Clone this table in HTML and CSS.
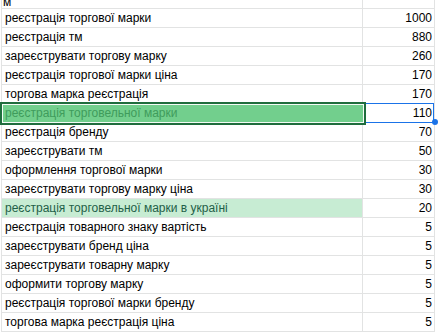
FILE: index.html
```html
<!DOCTYPE html>
<html lang="uk">
<head>
<meta charset="utf-8">
<title>Sheet</title>
<link rel="stylesheet" href="styles.css">
</head>
<body>
<div class="sheet">
  <div class="row head"><div class="cell a"><span class="cut">м</span></div><div class="cell b"></div></div>
  <div class="row"><div class="cell a">реєстрація торгової марки</div><div class="cell b">1000</div></div>
  <div class="row"><div class="cell a">реєстрація тм</div><div class="cell b">880</div></div>
  <div class="row"><div class="cell a">зареєструвати торгову марку</div><div class="cell b">260</div></div>
  <div class="row"><div class="cell a">реєстрація торгової марки ціна</div><div class="cell b">170</div></div>
  <div class="row"><div class="cell a">торгова марка реєстрація</div><div class="cell b">170</div></div>
  <div class="row sel"><div class="cell a"><span class="hl"></span><span class="txt">реєстрація торговельної марки</span></div><div class="cell b"><span class="focus"></span><span class="txt">110</span><span class="handle"></span></div></div>
  <div class="row"><div class="cell a">реєстрація бренду</div><div class="cell b">70</div></div>
  <div class="row"><div class="cell a">зареєструвати тм</div><div class="cell b">50</div></div>
  <div class="row"><div class="cell a">оформлення торгової марки</div><div class="cell b">30</div></div>
  <div class="row"><div class="cell a">зареєструвати торгову марку ціна</div><div class="cell b">30</div></div>
  <div class="row light"><div class="cell a">реєстрація торговельної марки в україні</div><div class="cell b">20</div></div>
  <div class="row"><div class="cell a">реєстрація товарного знаку вартість</div><div class="cell b">5</div></div>
  <div class="row"><div class="cell a">зареєструвати бренд ціна</div><div class="cell b">5</div></div>
  <div class="row"><div class="cell a">зареєструвати товарну марку</div><div class="cell b">5</div></div>
  <div class="row"><div class="cell a">оформити торгову марку</div><div class="cell b">5</div></div>
  <div class="row"><div class="cell a">реєстрація торгової марки бренду</div><div class="cell b">5</div></div>
  <div class="row"><div class="cell a">торгова марка реєстрація ціна</div><div class="cell b">5</div></div>
</div>
</body>
</html>
```
FILE: styles.css
```css
html, body {
  margin: 0;
  padding: 0;
  background: #fff;
  height: 333px;
  overflow: hidden;
}
body {
  font-family: "Liberation Sans", Arial, sans-serif;
  font-size: 12px;
  color: #000;
}
.sheet {
  margin-left: 1px;
  border-left: 1px solid #e2e3e3;
  width: 433px;
}
.row {
  display: flex;
  height: 19px;
}
.cell {
  box-sizing: border-box;
  height: 19px;
  line-height: 18px;
  border-right: 1px solid #e2e3e3;
  border-bottom: 1px solid #e2e3e3;
  white-space: nowrap;
  overflow: hidden;
}
.a {
  width: 361px;
  padding-left: 3px;
}
.b {
  width: 72px;
  padding-right: 2px;
  text-align: right;
}
.head, .head .cell {
  height: 9px;
}
.cut {
  display: block;
  margin-top: -7px;
  margin-left: -2px;
}
.sel .cell {
  position: relative;
  overflow: visible;
}
.sel .txt {
  position: relative;
  z-index: 3;
}
.sel .a .txt {
  color: #3f9c5c;
}
.hl {
  position: absolute;
  left: -2px;
  top: -2px;
  width: 366px;
  height: 23px;
  box-sizing: border-box;
  border: 2px solid #1f6d3d;
  background: #72cf8d;
  box-shadow: inset 0 0 0 1px #f4fbf6;
  z-index: 2;
}
.focus {
  position: absolute;
  left: -1px;
  top: -1px;
  width: 72px;
  height: 20px;
  box-sizing: border-box;
  border: 1px solid #1a73e8;
  z-index: 1;
}
.handle {
  position: absolute;
  left: 69px;
  top: 15px;
  width: 6px;
  height: 6px;
  border-radius: 50%;
  background: #1a73e8;
  z-index: 4;
}
.light .a {
  background: #c7ecd3;
  color: #1f5f48;
}
```
